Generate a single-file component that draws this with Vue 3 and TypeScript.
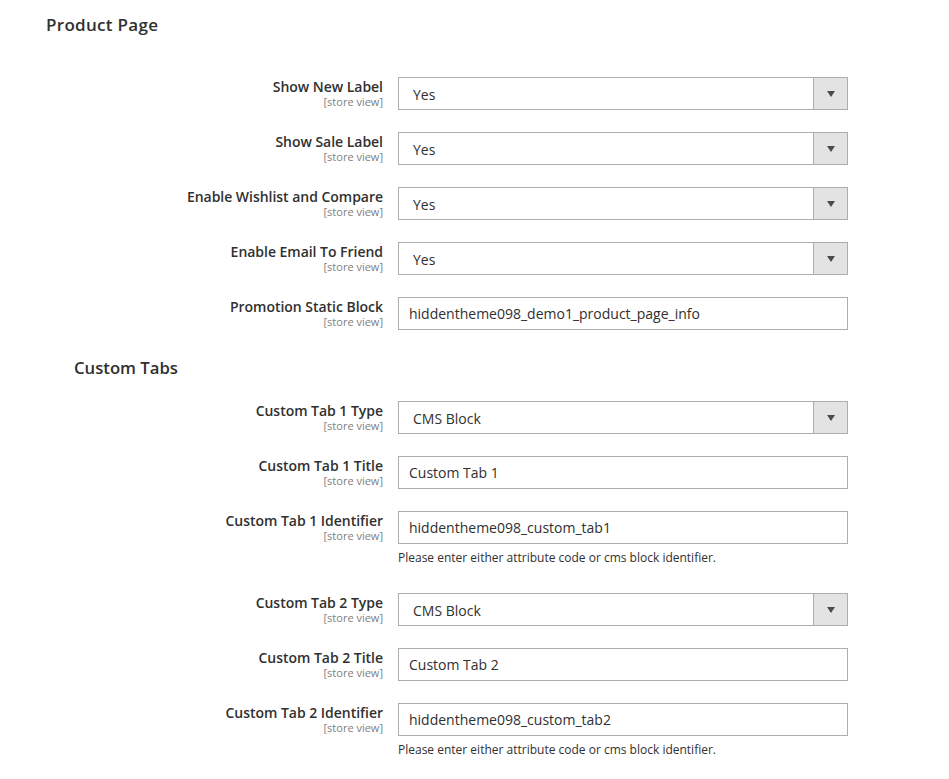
<script setup lang="ts">
interface Field {
  label: string;
  type: 'select' | 'text';
  value: string;
  note?: string;
}

const productFields: Field[] = [
  { label: 'Show New Label', type: 'select', value: 'Yes' },
  { label: 'Show Sale Label', type: 'select', value: 'Yes' },
  { label: 'Enable Wishlist and Compare', type: 'select', value: 'Yes' },
  { label: 'Enable Email To Friend', type: 'select', value: 'Yes' },
  { label: 'Promotion Static Block', type: 'text', value: 'hiddentheme098_demo1_product_page_info' }
];

const noteText = 'Please enter either attribute code or cms block identifier.';

const tabFields: Field[] = [
  { label: 'Custom Tab 1 Type', type: 'select', value: 'CMS Block' },
  { label: 'Custom Tab 1 Title', type: 'text', value: 'Custom Tab 1' },
  { label: 'Custom Tab 1 Identifier', type: 'text', value: 'hiddentheme098_custom_tab1', note: noteText },
  { label: 'Custom Tab 2 Type', type: 'select', value: 'CMS Block' },
  { label: 'Custom Tab 2 Title', type: 'text', value: 'Custom Tab 2' },
  { label: 'Custom Tab 2 Identifier', type: 'text', value: 'hiddentheme098_custom_tab2', note: noteText }
];
</script>

<template>
  <div class="config">
    <h2 class="config__title">Product Page</h2>

    <div class="config__rows">
      <div v-for="field in productFields" :key="field.label" class="row">
        <div class="row__label">
          <span class="row__name">{{ field.label }}</span>
          <span class="row__scope">[store view]</span>
        </div>
        <div class="row__control">
          <div v-if="field.type === 'select'" class="select">
            <select class="select__input">
              <option>{{ field.value }}</option>
            </select>
            <span class="select__arrow"></span>
          </div>
          <input v-else class="text-input" type="text" :value="field.value" />
        </div>
      </div>
    </div>

    <h3 class="config__subtitle">Custom Tabs</h3>

    <div class="config__rows">
      <div v-for="field in tabFields" :key="field.label" class="row" :class="{ 'row--noted': field.note }">
        <div class="row__label">
          <span class="row__name">{{ field.label }}</span>
          <span class="row__scope">[store view]</span>
        </div>
        <div class="row__control">
          <div v-if="field.type === 'select'" class="select">
            <select class="select__input">
              <option>{{ field.value }}</option>
            </select>
            <span class="select__arrow"></span>
          </div>
          <input v-else class="text-input" type="text" :value="field.value" />
          <p v-if="field.note" class="row__note">{{ field.note }}</p>
        </div>
      </div>
    </div>
  </div>
</template>

<style>
html,
body {
  background: #fff;
}
</style>

<style scoped>
.config {
  box-sizing: border-box;
  width: 949px;
  height: 779px;
  overflow: hidden;
  padding: 13px 0 0 46px;
  font-family: "Open Sans", sans-serif;
  color: #303030;
}

.config__title {
  margin: 0 0 40px;
  font-size: 17px;
  line-height: 24px;
  font-weight: 600;
  letter-spacing: 0.3px;
}

.config__subtitle {
  margin: 26px 0 21px 28px;
  font-size: 16.7px;
  line-height: 24px;
  font-weight: 600;
}

.config__rows {
  display: flex;
  flex-direction: column;
  gap: 22px;
}

.row {
  display: grid;
  grid-template-columns: 337px 450px;
  column-gap: 15px;
}

.row--noted {
  margin-bottom: 5px;
}

.row__label {
  display: flex;
  flex-direction: column;
  align-items: flex-end;
  padding-top: 1px;
}

.row__name {
  font-size: 14px;
  line-height: 18px;
  font-weight: 600;
  letter-spacing: -0.03px;
}

.row__scope {
  font-size: 11px;
  line-height: 11px;
  color: #808080;
}

.row__note {
  margin: 5px 0 0;
  font-size: 12px;
  line-height: 17px;
}

.select {
  position: relative;
  height: 33px;
}

.select__input {
  display: block;
  box-sizing: border-box;
  width: 100%;
  height: 33px;
  padding: 2px 40px 0 14px;
  border: 1px solid #adadad;
  border-radius: 0;
  background: #fff;
  appearance: none;
  font-family: inherit;
  font-size: 14px;
  color: #303030;
}

.select__arrow {
  position: absolute;
  top: 0;
  right: 0;
  box-sizing: border-box;
  width: 35px;
  height: 33px;
  border: 1px solid #adadad;
  background: #e3e3e3;
  pointer-events: none;
}

.select__arrow::after {
  content: "";
  position: absolute;
  top: 13px;
  left: 13px;
  border-style: solid;
  border-width: 6px 4px 0;
  border-color: #514943 transparent transparent;
}

.text-input {
  display: block;
  box-sizing: border-box;
  width: 100%;
  height: 33px;
  padding: 0 10px;
  border: 1px solid #adadad;
  border-radius: 0;
  outline: none;
  font-family: inherit;
  font-size: 14px;
  color: #303030;
}
</style>
